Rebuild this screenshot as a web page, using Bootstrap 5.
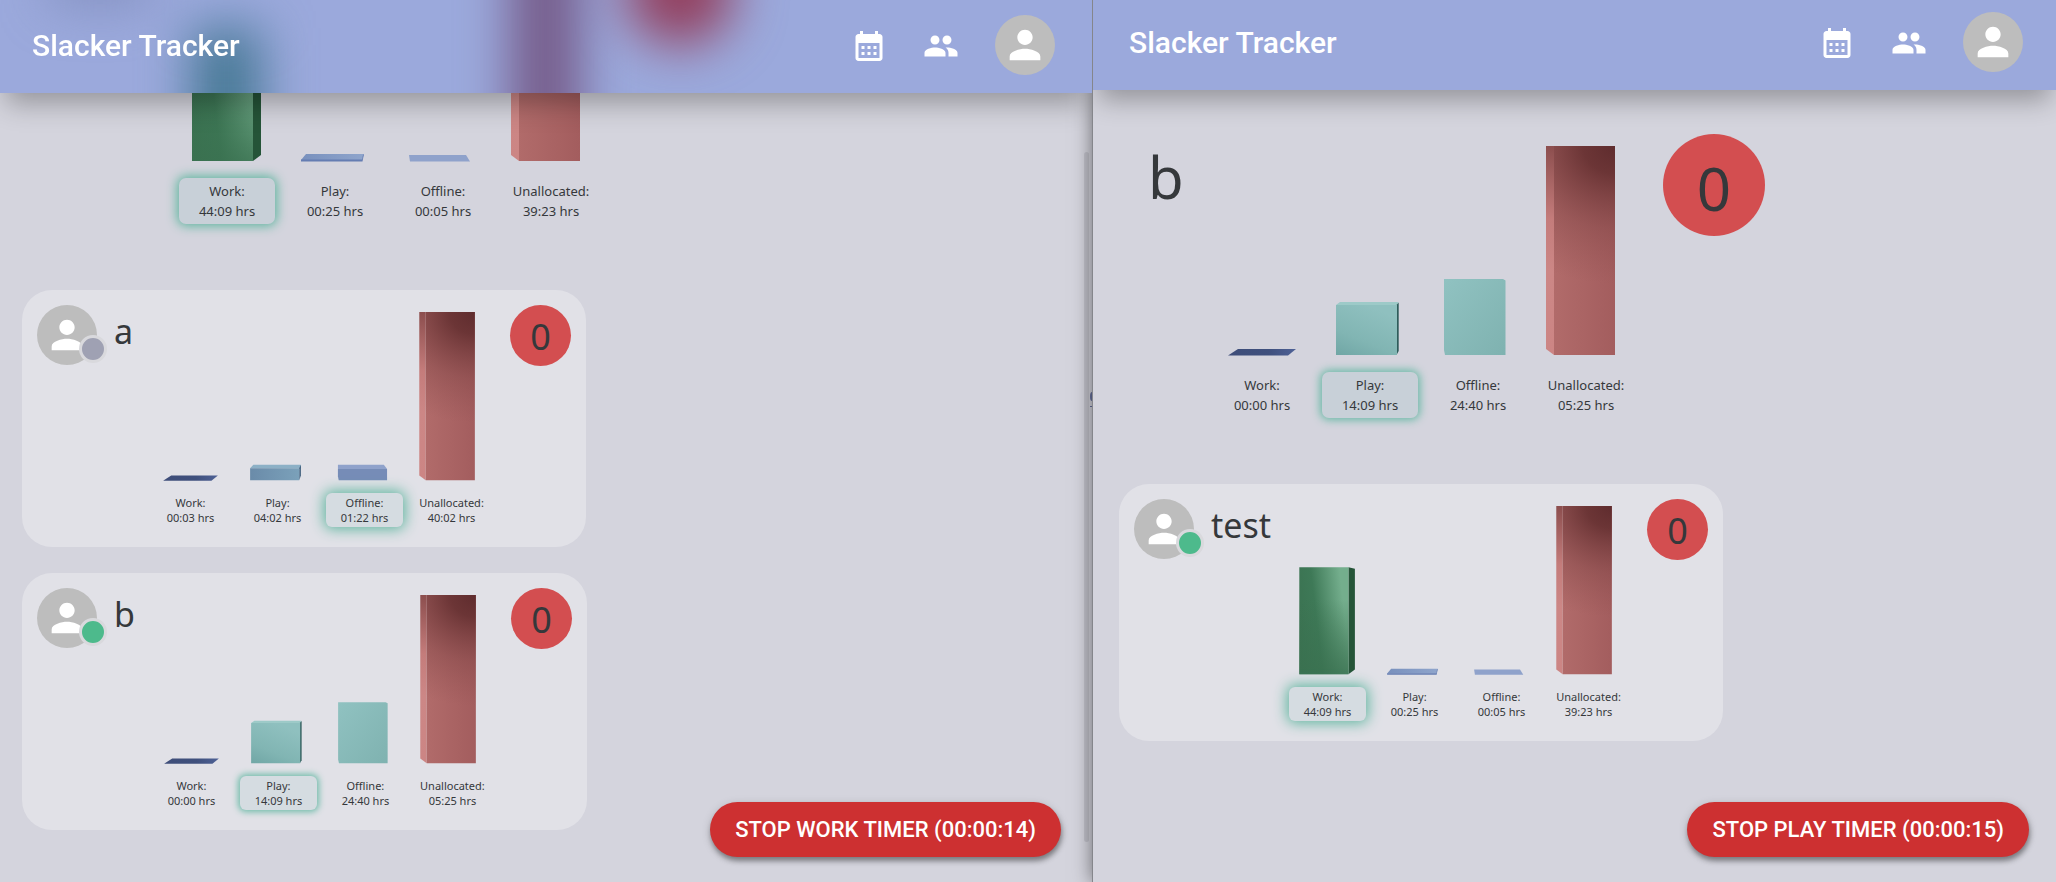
<!DOCTYPE html>
<html lang="en">
<head>
<meta charset="utf-8">
<meta name="viewport" content="width=device-width, initial-scale=1">
<title>Slacker Tracker</title>
<link href="https://cdn.jsdelivr.net/npm/bootstrap@5.3.0/dist/css/bootstrap.min.css" rel="stylesheet">
<style>
  body { background: #d4d4dd; color: #35383b; font-family: "Noto Sans", sans-serif; overflow: hidden; }
  .windows { display: grid; grid-template-columns: 1092fr 964fr; height: 100vh; }
  .pane { --edge: 22px; --bar-start: 32px; --bar-end: 37px; --bar-top: 15px; --fab-end: 31px; background: #d4d4dd; min-width: 0; }
  .pane-front { --edge: 26px; --bar-start: 36px; --bar-end: 33px; --bar-top: 12px; --fab-end: 27px; border-left: 1px solid #85868b; box-shadow: 0 0 18px rgba(0,0,0,.5); z-index: 3; }
  .pane-scroll { overflow-y: scroll; scrollbar-width: none; }
  .pane-scroll::-webkit-scrollbar { display: none; }
  .app-bar { padding: var(--bar-top) var(--bar-end) 18px var(--bar-start); background: #9ba9dc; box-shadow: 0 16px 26px -6px rgba(0,0,0,.3); }
  .app-title { font: 500 30px/40px Roboto, sans-serif; color: #fff; text-decoration: none; padding-top: 2px; }
  .bar-actions { gap: 36px; }
  .glass { inset: 0; }
  .icon-btn { color: #fff; line-height: 0; }
  .icon-btn svg { margin-top: 2px; }
  .avatar { width: 60px; height: 60px; background: #bdbdbd; color: #fff; }
  .status { width: 28px; height: 28px; right: -10px; bottom: 2px; border: 3px solid #d9d9dd; background: #4dba8c; }
  .status-away { background: #9fa1b3; }
  .people { padding: 44px var(--edge) 80px; }
  .owner { gap: 23px; padding: 0 27px; margin-bottom: 66px; }
  .owner-scrolled { padding-left: 151px; }
  .member-list { gap: 26px; }
  .member { gap: 15px; padding: 15px; border-radius: 30px; background: rgba(255,255,255,.3); }
  .person-name { font-size: 34px; line-height: normal; font-weight: 400; margin: 3px -2px 0 2px; min-width: 20px; }
  .owner .person-name { font-size: 58px; min-width: 39px; }
  .score { width: 61px; height: 61px; padding-top: 3px; background: #d34e50; font-size: 36px; line-height: 1; }
  .owner .score { width: 102px; height: 102px; padding-top: 6px; font-size: 60px; }
  .chart { width: 348px; padding: 7px 0 5px; }
  .owner .chart { width: 432px; padding: 12px 0 0; }
  .chart svg { width: 100%; margin-bottom: 12px; }
  .owner .chart svg { margin-bottom: 16px; }
  .times { display: grid; grid-template-columns: repeat(4, 1fr); font-size: 11px; line-height: 15px; text-align: center; }
  .owner .times { font-size: 13px; line-height: 20px; }
  .times > div { margin: 0 5px; padding: 2px 0; white-space: nowrap; border-radius: 6px; }
  .owner .times > div { margin: 0 6px; padding: 3px 0; border-radius: 7px; }
  .times > .running { background: #d5dce1; box-shadow: 0 0 14px 2px #5db59e; }
  .owner .times > .running { background: #c8d0d8; box-shadow: 0 0 11px 2px #5db59e; }
  .times > .running-dim { box-shadow: 0 0 6px 2px #70bcaa; }
  .owner .times > .running-dim { box-shadow: 0 0 8px 2px #68b9a5; }
  .fab { right: var(--fab-end); bottom: 25px; height: 55px; padding: 0 25px; border: 0; border-radius: 28px; background: #cd3031; color: #fff; font: 500 22px/55px Roboto, sans-serif; box-shadow: 1px 4px 5px rgba(0,0,0,.35), 0 2px 10px rgba(0,0,0,.15); text-transform: uppercase; }
  .thumb { right: 3px; top: 152px; bottom: 40px; width: 5px; border-radius: 3px; background: rgba(120,120,130,.2); }
  .peek { right: 0; top: 392px; opacity: .7; }
</style>
</head>
<body>

<svg width="0" height="0" class="position-absolute" aria-hidden="true">
  <defs>
    <linearGradient id="redFront"><stop offset="0" stop-color="#b16b6a"/><stop offset="1" stop-color="#a35d5e"/></linearGradient>
    <radialGradient id="redShade" cx="0" cy="0" r="1" gradientTransform="translate(1 0) scale(2.6 .66)"><stop offset="0" stop-color="#5f2c2e"/><stop offset=".2" stop-color="#653031" stop-opacity=".9"/><stop offset=".6" stop-color="#7d4243" stop-opacity=".4"/><stop offset="1" stop-color="#8a4a4b" stop-opacity="0"/></radialGradient>
    <linearGradient id="redSide" x2="0" y2="1"><stop offset="0" stop-color="#8c4e4e"/><stop offset=".35" stop-color="#c47c7b"/><stop offset=".6" stop-color="#cc8786"/><stop offset="1" stop-color="#cc8584"/></linearGradient>
    <linearGradient id="greenFront" x1="0" y1="1" x2="1" y2=".75"><stop offset="0" stop-color="#3a7150"/><stop offset=".45" stop-color="#3e7957"/><stop offset="1" stop-color="#74ae8d"/></linearGradient>
    <linearGradient id="greenFade" x2="0" y2="1"><stop offset=".3" stop-color="#3a7150" stop-opacity="0"/><stop offset="1" stop-color="#3a7150" stop-opacity=".8"/></linearGradient>
    <linearGradient id="tealPlay" x1="0" y1="1" x2=".5" y2="0"><stop offset="0" stop-color="#70a6a5"/><stop offset=".4" stop-color="#81b5b3"/><stop offset="1" stop-color="#8fc0bf"/></linearGradient>
    <linearGradient id="tealOff" x2="1" y2="1"><stop offset="0" stop-color="#90c2c1"/><stop offset="1" stop-color="#7fb2b0"/></linearGradient>
    <linearGradient id="navy"><stop offset="0" stop-color="#3e4d79"/><stop offset=".6" stop-color="#3f507d"/><stop offset="1" stop-color="#4e6196"/></linearGradient>
    <linearGradient id="steel"><stop offset="0" stop-color="#6a8ba9"/><stop offset="1" stop-color="#7ba1ba"/></linearGradient>
    <linearGradient id="flat"><stop offset="0" stop-color="#7890bd"/><stop offset="1" stop-color="#8fa5cc"/></linearGradient>
    <filter id="frost" filterUnits="userSpaceOnUse" x="-80" y="-150" width="1000" height="450" color-interpolation-filters="sRGB"><feGaussianBlur stdDeviation="25"/></filter>
    <g id="redBar">
      <path d="M338 0H346V209L338 203Z" fill="url(#redSide)"/>
      <path d="M346 0H407V209H346Z" fill="url(#redFront)"/>
      <path d="M346 0H407V209H346Z" fill="url(#redShade)"/>
    </g>
    <g id="navyBar"><path d="M20 209.5H80L88 203H30Z" fill="url(#navy)"/></g>
    <symbol id="chart-test" viewBox="0 0 432 210">
      <path d="M80 76L88 78V203L80 209Z" fill="#255438"/>
      <path d="M19 76H80V209H19Z" fill="url(#greenFront)"/>
      <path d="M19 76H80V209H19Z" fill="url(#greenFade)"/>
      <path d="M133 202H191L189 208H128Z" fill="url(#flat)"/>
      <path d="M128 207.5H189L190 203L191 202L189.500 209.500H128Z" fill="#657db2"/>
      <path d="M236 203H293L297 209.500H237Z" fill="#8fa2cb"/>
      <use href="#redBar"/>
    </symbol>
    <symbol id="chart-a" viewBox="0 0 432 210">
      <use href="#navyBar"/>
      <path d="M132 189.500H191V194H128Z" fill="#8cb0c6"/>
      <path d="M189 194L191 189.500V203L189 209Z" fill="#3a5a79"/>
      <path d="M128 194H189V209H128Z" fill="url(#steel)"/>
      <path d="M237 189.500H294L298 195H237Z" fill="#8fa2cb"/>
      <path d="M237 195H298V209H238L237 204Z" fill="#768cb7"/>
      <use href="#redBar"/>
    </symbol>
    <symbol id="chart-b" viewBox="0 0 432 210">
      <use href="#navyBar"/>
      <path d="M132 156H190.500L189 159H128Z" fill="#9dcac8"/>
      <path d="M188.500 159L190.700 156.500V205L188.500 209Z" fill="#2f5c5b"/>
      <path d="M128 159H189V209H128Z" fill="url(#tealPlay)"/>
      <path d="M236 133H295L297.500 134.500V209H237L236 204Z" fill="url(#tealOff)"/>
      <use href="#redBar"/>
    </symbol>
    <symbol id="i-person" viewBox="0 0 24 24"><path fill="currentColor" d="M12 12c2.210 0 4-1.790 4-4s-1.790-4-4-4-4 1.790-4 4 1.790 4 4 4zm0 2c-2.670 0-8 1.340-8 4v2h16v-2c0-2.660-5.330-4-8-4z"/></symbol>
    <symbol id="i-people" viewBox="0 0 24 24"><path fill="currentColor" d="M16 11c1.660 0 2.990-1.340 2.990-3S17.660 5 16 5s-3 1.340-3 3 1.340 3 3 3zm-8 0c1.660 0 2.990-1.340 2.990-3S9.660 5 8 5 5 6.340 5 8s1.340 3 3 3zm0 2c-2.330 0-7 1.170-7 3.500V19h14v-2.500c0-2.330-4.670-3.500-7-3.500zm8 0c-.29 0-.62.02-.97.05 1.160.84 1.970 1.970 1.970 3.450V19h6v-2.500c0-2.330-4.670-3.500-7-3.500z"/></symbol>
    <symbol id="i-calendar" viewBox="0 0 24 24"><path fill="currentColor" d="M19 4h-1V2h-2v2H8V2H6v2H5c-1.110 0-1.990.9-1.990 2L3 20c0 1.100.89 2 2 2h14c1.100 0 2-.9 2-2V6c0-1.100-.9-2-2-2zm0 16H5V10h14v10zM9 14H7v-2h2v2zm4 0h-2v-2h2v2zm4 0h-2v-2h2v2zm-8 4H7v-2h2v2zm4 0h-2v-2h2v2zm4 0h-2v-2h2v2z"/></symbol>
  </defs>
</svg>

<div class="windows">
  <section class="pane position-relative overflow-hidden">
    <div class="pane-scroll h-100" id="backScroll">
      <header class="app-bar sticky-top d-flex align-items-center justify-content-between">
        <!-- Frosted shapes of the chart that has scrolled under the bar -->
        <svg class="glass position-absolute w-100 h-100" aria-hidden="true">
          <g filter="url(#frost)">
            <path d="M50 -45H150V5H50Z" fill="#7480ad" opacity=".6"/>
            <path d="M192 28H261V170H192Z" fill="#457894"/>
            <path d="M511 -100H580V170H511Z" fill="#755a88"/>
            <circle cx="680" cy="-9" r="54" fill="#93405f"/>
          </g>
        </svg>
        <a class="app-title position-relative" href="#">Slacker Tracker</a>
        <div class="bar-actions position-relative d-flex align-items-center">
          <button class="icon-btn btn p-0 border-0" aria-label="Calendar"><svg width="36" height="36"><use href="#i-calendar"/></svg></button>
          <button class="icon-btn btn p-0 border-0" aria-label="People"><svg width="36" height="36"><use href="#i-people"/></svg></button>
          <button class="avatar btn p-0 border-0 rounded-circle d-flex align-items-center justify-content-center" aria-label="Account"><svg width="46" height="46"><use href="#i-person"/></svg></button>
        </div>
      </header>
      <main class="people">
        <article class="owner owner-scrolled d-flex align-items-start">
          <div class="chart">
            <svg class="d-block" viewBox="0 0 432 210"><use href="#chart-test"/></svg>
            <div class="times">
              <div class="running">Work:<br>44:09 hrs</div>
              <div>Play:<br>00:25 hrs</div>
              <div>Offline:<br>00:05 hrs</div>
              <div>Unallocated:<br>39:23 hrs</div>
            </div>
          </div>
        </article>
        <div class="member-list d-flex flex-column align-items-start">
          <article class="member d-flex align-items-start">
            <div class="avatar position-relative rounded-circle d-flex align-items-center justify-content-center"><svg width="46" height="46"><use href="#i-person"/></svg><span class="status status-away position-absolute rounded-circle"></span></div>
            <h2 class="person-name">a</h2>
            <div class="chart">
              <svg class="d-block" viewBox="0 0 432 210"><use href="#chart-a"/></svg>
              <div class="times">
                <div>Work:<br>00:03 hrs</div>
                <div>Play:<br>04:02 hrs</div>
                <div class="running">Offline:<br>01:22 hrs</div>
                <div>Unallocated:<br>40:02 hrs</div>
              </div>
            </div>
            <div class="score rounded-circle d-flex align-items-center justify-content-center">0</div>
          </article>
          <article class="member d-flex align-items-start">
            <div class="avatar position-relative rounded-circle d-flex align-items-center justify-content-center"><svg width="46" height="46"><use href="#i-person"/></svg><span class="status position-absolute rounded-circle"></span></div>
            <h2 class="person-name">b</h2>
            <div class="chart">
              <svg class="d-block" viewBox="0 0 432 210"><use href="#chart-b"/></svg>
              <div class="times">
                <div>Work:<br>00:00 hrs</div>
                <div class="running running-dim">Play:<br>14:09 hrs</div>
                <div>Offline:<br>24:40 hrs</div>
                <div>Unallocated:<br>05:25 hrs</div>
              </div>
            </div>
            <div class="score rounded-circle d-flex align-items-center justify-content-center">0</div>
          </article>
        </div>
      </main>
    </div>
    <span class="thumb position-absolute"></span>
    <svg class="peek position-absolute" width="2" height="16" aria-hidden="true"><path d="M2 0Q0 0 0 4.500T2 9ZM0 14H2V15H0Z" fill="#3b4a86"/></svg>
    <button class="fab position-absolute">Stop work timer (00:00:14)</button>
  </section>

  <section class="pane pane-front position-relative">
    <div class="pane-scroll h-100">
      <header class="app-bar sticky-top d-flex align-items-center justify-content-between">
        <a class="app-title" href="#">Slacker Tracker</a>
        <div class="bar-actions d-flex align-items-center">
          <button class="icon-btn btn p-0 border-0" aria-label="Calendar"><svg width="36" height="36"><use href="#i-calendar"/></svg></button>
          <button class="icon-btn btn p-0 border-0" aria-label="People"><svg width="36" height="36"><use href="#i-people"/></svg></button>
          <button class="avatar btn p-0 border-0 rounded-circle d-flex align-items-center justify-content-center" aria-label="Account"><svg width="46" height="46"><use href="#i-person"/></svg></button>
        </div>
      </header>
      <main class="people">
        <article class="owner d-flex align-items-start">
          <h2 class="person-name">b</h2>
          <div class="chart">
            <svg class="d-block" viewBox="0 0 432 210"><use href="#chart-b"/></svg>
            <div class="times">
              <div>Work:<br>00:00 hrs</div>
              <div class="running running-dim">Play:<br>14:09 hrs</div>
              <div>Offline:<br>24:40 hrs</div>
              <div>Unallocated:<br>05:25 hrs</div>
            </div>
          </div>
          <div class="score rounded-circle d-flex align-items-center justify-content-center">0</div>
        </article>
        <div class="member-list d-flex flex-column align-items-start">
          <article class="member d-flex align-items-start">
            <div class="avatar position-relative rounded-circle d-flex align-items-center justify-content-center"><svg width="46" height="46"><use href="#i-person"/></svg><span class="status position-absolute rounded-circle"></span></div>
            <h2 class="person-name">test</h2>
            <div class="chart">
              <svg class="d-block" viewBox="0 0 432 210"><use href="#chart-test"/></svg>
              <div class="times">
                <div class="running">Work:<br>44:09 hrs</div>
                <div>Play:<br>00:25 hrs</div>
                <div>Offline:<br>00:05 hrs</div>
                <div>Unallocated:<br>39:23 hrs</div>
              </div>
            </div>
            <div class="score rounded-circle d-flex align-items-center justify-content-center">0</div>
          </article>
        </div>
      </main>
    </div>
    <button class="fab position-absolute">Stop play timer (00:00:15)</button>
  </section>
</div>

<script src="https://cdn.jsdelivr.net/npm/bootstrap@5.3.0/dist/js/bootstrap.bundle.min.js"></script>
<script>
  // The first window opens scrolled down to its list of people.
  document.getElementById('backScroll').scrollTop = 197;
</script>
</body>
</html>
